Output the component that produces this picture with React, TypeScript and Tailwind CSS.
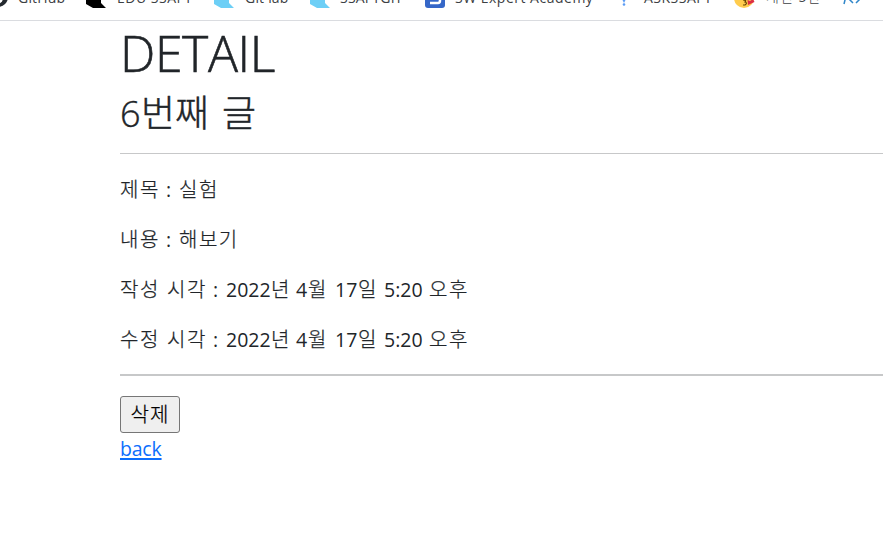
import type { ReactNode } from "react";

const latin = "font-['Open_Sans','Noto_Sans',sans-serif]";
const korean = "font-['Noto_Sans_CJK_KR',sans-serif] font-light";

function Ko({ w, children }: { w: string; children: ReactNode }) {
  return <span className={`${korean} ${w} shrink-0 whitespace-nowrap text-[20px] tracking-[1.5px] [-webkit-text-stroke:0.25px]`}>{children}</span>;
}

function En({ w, children }: { w: string; children: ReactNode }) {
  return <span className={`${latin} ${w} shrink-0 whitespace-nowrap text-[19.5px]`}>{children}</span>;
}

function Row({ children }: { children: ReactNode }) {
  return <p className="mb-5 flex h-[30px] items-baseline leading-[30px]">{children}</p>;
}

function Stamp() {
  return (
    <>
      <En w="w-[13px]">:</En>
      <En w="w-[45px]">2022</En>
      <Ko w="w-[25px]">년</Ko>
      <En w="w-[12px]">4</En>
      <Ko w="w-[27px]">월</Ko>
      <En w="w-[23px]">17</En>
      <Ko w="w-[26px]">일</Ko>
      <En w="w-[45px]">5:20</En>
      <Ko w="w-[40px]">오후</Ko>
    </>
  );
}

function Bookmark({ w, iconW, icon, children }: { w: string; iconW: string; icon: ReactNode; children: ReactNode }) {
  return (
    <div className={`flex shrink-0 items-center ${w}`}>
      <span className={`shrink-0 ${iconW}`}>{icon}</span>
      <span className="whitespace-nowrap">{children}</span>
    </div>
  );
}

function Flag({ color }: { color: string }) {
  return (
    <svg width="22" height="20" viewBox="0 0 22 20" fill={color}>
      <path d="M0 0H15V15L20 20H7L0 16Z" />
    </svg>
  );
}

export default function App() {
  return (
    <div className="h-[544px] w-[883px] overflow-hidden bg-white text-[#212529]">
      <header className="h-[21px] overflow-hidden border-b border-[#dadce0]">
        <div className={`-mt-[12px] flex h-5 items-center text-[14px] leading-5 tracking-[0.2px] text-[#3c4043] ${latin}`}>
          <Bookmark w="w-[86px]" iconW="w-[18px]" icon={
            <svg width="9" height="20" viewBox="0 0 9 20"><circle cx="-2" cy="9" r="10" fill="#24292f" /><circle cx="-3" cy="10" r="6" fill="#fff" /></svg>
          }>GitHub</Bookmark>
          <Bookmark w="w-[128px]" iconW="w-[31px]" icon={<Flag color="#000" />}><span className="tracking-[0.5px]">EDU SSAFY</span></Bookmark>
          <Bookmark w="w-[96px]" iconW="w-[31px]" icon={<Flag color="#6dcff6" />}>Git lab</Bookmark>
          <Bookmark w="w-[115px]" iconW="w-[30px]" icon={<Flag color="#6dcff6" />}>SSAFYGIT</Bookmark>
          <Bookmark w="w-[191px]" iconW="w-[30px]" icon={
            <svg width="20" height="20" viewBox="0 0 20 20"><rect width="20" height="20" rx="3" fill="#3567c8" /><path d="M5 10h8q2 0 2 2.5t-2 2.5H5" fill="none" stroke="#fff" strokeWidth="2.5" /></svg>
          }><span className="tracking-[0.5px]">SW Expert Academy</span></Bookmark>
          <Bookmark w="w-[118px]" iconW="w-[28px]" icon={
            <svg width="16" height="20" viewBox="0 0 16 20"><path d="M5 9H11L8 15Z" fill="#5b9cf5" /><circle cx="8" cy="16.5" r="1.3" fill="#5b9cf5" /></svg>
          }><span className="tracking-[0.5px]">ASKSSAFY</span></Bookmark>
          <Bookmark w="w-[108px]" iconW="w-[32px]" icon={
            <svg width="21" height="20" viewBox="0 0 21 20"><circle cx="10" cy="10" r="10" fill="#ffcc4d" /><path d="M9 12q4 0 2 2q3 1 0 3h-2" fill="none" stroke="#664500" strokeWidth="1.2" /><path d="M14 17l-.5-5 2.5 1 3-2 1.5 3Z" fill="#dd2e44" /></svg>
          }><span className="block pb-1 tracking-[1px]"><span className={korean}>개인</span> 5<span className={korean}>반</span></span></Bookmark>
          <svg className="shrink-0" width="20" height="20" viewBox="0 0 20 20" fill="none" stroke="#2f86c9" strokeWidth="1.5"><path d="M5 4L2 16M11 7L7 11L11 15M14 15L18 11L14 7" /></svg>
        </div>
      </header>
      <main className="pl-[120px]">
        <h1 className={`h-[65px] whitespace-nowrap text-[50px] font-light leading-[65px] tracking-[-0.4px] [-webkit-text-stroke:0.6px] ${latin}`}>DETAIL</h1>
        <h2 className="flex h-[48px] items-baseline pt-px leading-[48px] [-webkit-text-stroke:0.4px]">
          <span className={`w-[21px] text-[36px] font-light ${latin}`}>6</span>
          <span className={`w-[81px] whitespace-nowrap text-[37px] ${korean}`}>번째</span>
          <span className={`text-[37px] ${korean}`}>글</span>
        </h2>
        <hr className="mb-5 mt-[19px] h-px border-0 bg-[#c7c8c9]" />
        <Row><Ko w="w-[46px]">제목</Ko><En w="w-[13px]">:</En><Ko w="w-[60px]">실험</Ko></Row>
        <Row><Ko w="w-[46px]">내용</Ko><En w="w-[13px]">:</En><Ko w="w-[60px]">해보기</Ko></Row>
        <Row><Ko w="w-[47px]">작성</Ko><Ko w="w-[46px]">시각</Ko><Stamp /></Row>
        <Row><Ko w="w-[47px]">수정</Ko><Ko w="w-[46px]">시각</Ko><Stamp /></Row>
        <hr className="mb-5 h-[2px] border-0 bg-[#c7c8c9]" />
        <button className={`block h-[37px] w-[60px] rounded-[3px] border border-[#767676] bg-[#efefef] pb-[2px] text-[20px] leading-[32px] tracking-[1.1px] text-black [-webkit-text-stroke:0.25px] ${korean}`}>삭제</button>
        <a href="#" className={`block w-[42px] text-[19.5px] leading-[32px] tracking-[-0.2px] text-[#0d6efd] underline decoration-2 underline-offset-2 ${latin}`}>back</a>
      </main>
    </div>
  );
}
